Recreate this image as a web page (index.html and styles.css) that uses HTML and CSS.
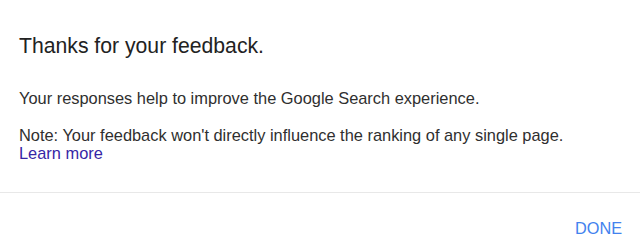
FILE: index.html
```html
<!DOCTYPE html>
<html lang="en">
<head>
    <meta charset="UTF-8">
    <meta name="viewport" content="width=device-width, initial-scale=1.0">
    <title>Feedback</title>
    <link rel="stylesheet" href="styles.css">
</head>
<body>
    <div class="dialog">
        <div class="dialog-body">
            <h1>Thanks for your feedback.</h1>
            <p>Your responses help to improve the Google Search experience.</p>
            <p class="note">Note: Your feedback won't directly influence the ranking of any single page.<br>
                <a href="#">Learn more</a></p>
        </div>
        <div class="dialog-actions">
            <button type="button">DONE</button>
        </div>
    </div>
</body>
</html>
```

FILE: styles.css
```css
body {
    margin: 0;
    font-family: "Liberation Sans", Arial, sans-serif;
    background-color: #fff;
    color: #222;
}
.dialog {
    width: 640px;
    height: 250px;
}
.dialog-body {
    padding: 34px 19px 0;
    height: 158px;
    border-bottom: 1px solid #e8e8e8;
}
h1 {
    font-size: 21.2px;
    line-height: 24px;
    font-weight: normal;
    margin: 0 0 31px;
    color: #222;
}
p {
    font-size: 16.4px;
    line-height: 18px;
    margin: 0 0 19px;
    color: #2f2f2f;
}
a {
    color: #3626a6;
    text-decoration: none;
}
.dialog-actions {
    display: flex;
    justify-content: flex-end;
    padding: 26px 18px 0;
}
button {
    background: none;
    border: none;
    padding: 0;
    font-family: inherit;
    font-size: 16.3px;
    line-height: 18px;
    color: #4282ee;
    cursor: pointer;
}
```
